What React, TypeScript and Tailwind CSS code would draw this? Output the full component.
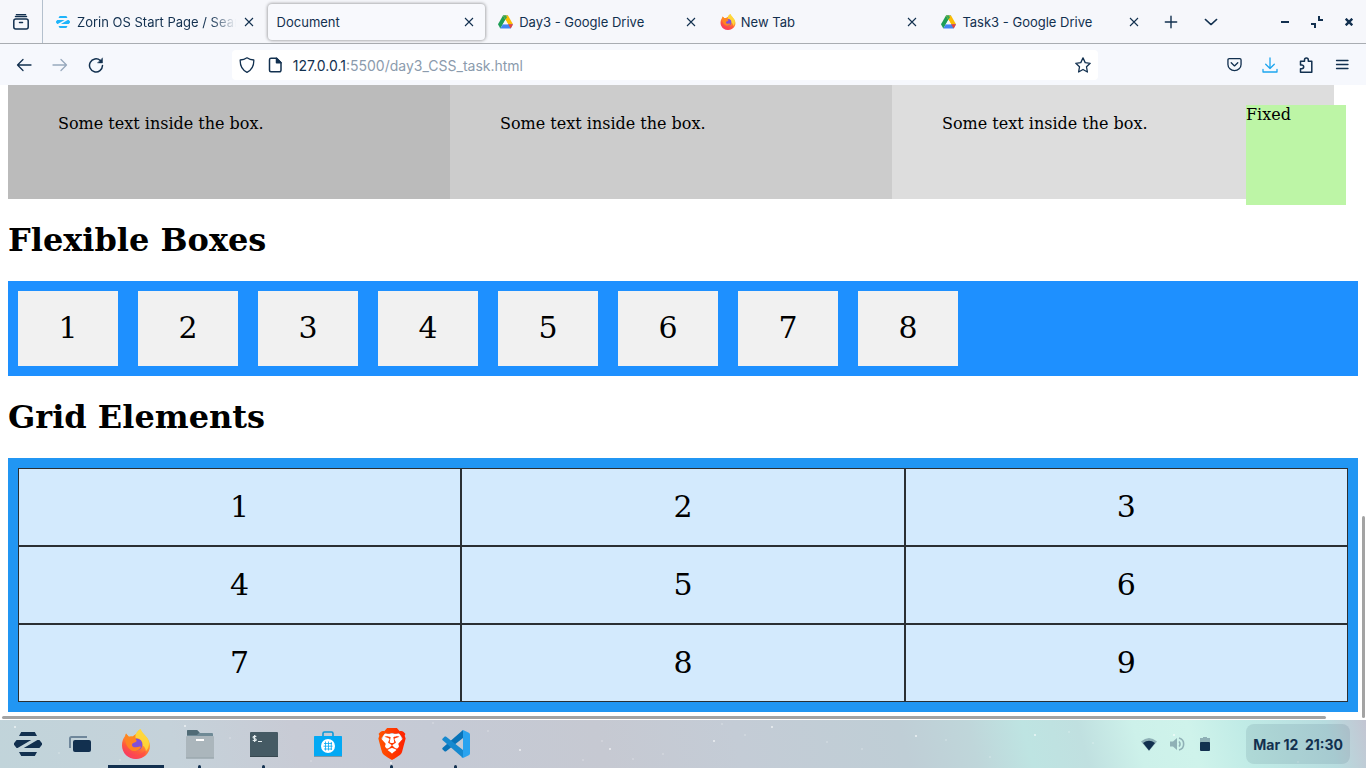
import React from "react";
import { SiBrave } from "react-icons/si";

const NAVY = "#12304f";

function CloseIcon() {
  return (
    <svg width="10" height="10" viewBox="0 0 10 10" fill="none" stroke="currentColor" strokeWidth="1.1">
      <path d="M1 1l8 8M9 1L1 9" />
    </svg>
  );
}

function ZorinMark({ width, height }: { width: number; height: number }) {
  return (
    <svg width={width} height={height} viewBox="0 0 28 24" fill="currentColor">
      <path d="M7.2 0h13.600L23 4H5zM5 20h18l-2.200 4H7.200z" />
      <path d="M2.600 8h14.600L3.600 16h-1L0 12.800v-1.600zM23.400 8h2L28 11.200v1.600L25.400 16H9.800z" />
    </svg>
  );
}

function DriveIcon() {
  return (
    <svg width="15" height="14" viewBox="0 0 15 14">
      <path d="M5 .4L0 9.200l2.300 4.200L7.500 4.600z" fill="#1e9e57" />
      <path d="M5 .4h5L7.500 4.600z" fill="#188038" />
      <path d="M10 .4l5 8.800h-4.900L5.200.9z" fill="#fbbc04" />
      <path d="M5 .4L7.500 4.600 9 2.200 7.800.4z" fill="#34a853" />
      <path d="M4.900 9.200H15l-2.300 4.200H2.300z" fill="#4285f4" />
      <path d="M10.100 9.200H15l-2.300 4.200z" fill="#ea4335" />
      <path d="M7.500 4.800l2.500 4.400H5z" fill="#f6f7fb" />
    </svg>
  );
}

function FirefoxIcon({ size, id }: { size: number; id: string }) {
  return (
    <svg width={size} height={size} viewBox="0 0 30 30">
      <defs>
        <linearGradient id={id} x1="0.8" y1="0" x2="0.3" y2="1">
          <stop offset="0" stopColor="#ffe03a" />
          <stop offset="0.4" stopColor="#ffa02a" />
          <stop offset="0.7" stopColor="#ff5a3c" />
          <stop offset="1" stopColor="#f5316f" />
        </linearGradient>
      </defs>
      <path
        d="M19.500 0c1 3 3.200 4.500 4.800 6.800 2.900 3 4.700 6.400 4.700 10.200C29 24.200 22.700 30 15 30S1 24.200 1 16.500c0-4 1.200-7.500 3.200-9.700L5 4.500l2.800 3.200c1.400-.4 2.500-.4 3.700-.2L15 5l-.8 3.200C14.500 4.500 16.500 2 19.500 0z"
        fill={`url(#${id})`}
      />
      <path d="M2 16c0 8 6 11 12 10.500s11-3.500 11.500-9.500c.8 8-5 12.500-11 12.500S1.500 24 2 16z" fill="#ff4b4b" opacity=".6" />
      <circle cx="15.500" cy="15.500" r="6" fill="#8150d8" />
      <path d="M4.300 6.800L5 4.500l3 3.500 4-.4 2.700-2.300-.5 3.800 1.500 2.900c-1 1.500-3 1.500-4.200 2.500-1.500 2 .5 4.500 3.500 3.700 2.500-.6 4-.2 5.200-1-1.200 4.500-7.500 6.300-11 3.200-4-2.700-5.700-8.800-4.900-13.600z" fill="#ff8522" />
      <path d="M19.500 0c-5 3.500-5.500 7-4.500 9 3.500-.2 7 2.500 6.700 7.500 2 1 3.300 3.500 3 6 4.500-4.500 4.500-11.500-.4-15.700C22.700 4.500 20.500 3 19.500 0z" fill="#ffdb3b" opacity=".85" />
    </svg>
  );
}

type TabInfo = { title: string; icon?: React.ReactNode; active?: boolean; faded?: boolean };

const tabs: TabInfo[] = [
  {
    title: "Zorin OS Start Page / Sear",
    faded: true,
    icon: (
      <span className="text-[#1fb4fa]">
        <ZorinMark width={14} height={12} />
      </span>
    ),
  },
  { title: "Document", active: true },
  { title: "Day3 - Google Drive", icon: <DriveIcon /> },
  { title: "New Tab", icon: <FirefoxIcon size={16} id="tabFox" /> },
  { title: "Task3 - Google Drive", icon: <DriveIcon /> },
];

function Tab({ title, icon, active, faded }: TabInfo) {
  return (
    <div
      className={
        active
          ? "mr-[3px] flex h-9 min-w-0 flex-1 items-center rounded bg-[#f8f9fd] pl-[9px] pr-2 shadow-[0_0_3px_1px_rgba(0,0,0,0.3)]"
          : "mr-[3px] flex h-9 min-w-0 flex-1 items-center gap-[5px] pl-[10px] pr-2"
      }
    >
      {icon && <span className="flex w-4 shrink-0">{icon}</span>}
      <button
        className={
          faded
            ? "min-w-0 flex-1 whitespace-nowrap pt-[2px] text-left [mask-image:linear-gradient(to_right,black_84%,transparent)]"
            : "min-w-0 flex-1 whitespace-nowrap pt-[2px] text-left"
        }
      >
        {title}
      </button>
      <button aria-label={`Close ${title}`} className="flex size-4 shrink-0 items-center justify-center">
        <CloseIcon />
      </button>
    </div>
  );
}

function IconButton({ label, className = "", children }: { label: string; className?: string; children: React.ReactNode }) {
  return (
    <button aria-label={label} className={`flex size-9 shrink-0 items-center justify-center ${className}`}>
      {children}
    </button>
  );
}

function Line({ children, size = 16, width = 1.3 }: { children: React.ReactNode; size?: number; width?: number }) {
  return (
    <svg
      width={size}
      height={size}
      viewBox="0 0 16 16"
      fill="none"
      stroke="currentColor"
      strokeWidth={width}
      strokeLinecap="round"
      strokeLinejoin="round"
    >
      {children}
    </svg>
  );
}

function TabStrip() {
  return (
    <div className="flex h-11 items-center border-b border-[#a9adb2] bg-[#f6f7fb] text-[13px]">
      <button aria-label="Recent browsing" className="flex h-full w-[43px] shrink-0 items-center justify-center border-r border-[#b4c0cd] pr-px">
        <Line width={1.5}>
          <rect x="0.8" y="5" width="14.400" height="10" rx="2" />
          <path d="M2.500 2.600h11M3.500 0.600h9M6.500 8.500h3" />
        </Line>
      </button>
      <div className="ml-[3px] flex min-w-0 max-w-[1107px] flex-1">
        {tabs.map((t) => (
          <Tab key={t.title} {...t} />
        ))}
      </div>
      <IconButton label="New tab">
        <Line size={14} width={1.6}>
          <path d="M8 1.500v13M1.500 8h13" />
        </Line>
      </IconButton>
      <IconButton label="List all tabs" className="ml-1">
        <Line size={14} width={1.6}>
          <path d="M1.500 5L8 11l6.500-6" />
        </Line>
      </IconButton>
      <div className="ml-auto flex pr-px">
        <button aria-label="Minimize" className="flex size-8 items-center justify-center">
          <svg width="8" height="2"><rect width="8" height="2" fill={NAVY} /></svg>
        </button>
        <button aria-label="Restore" className="flex size-8 items-center justify-center">
          <svg width="12" height="12" fill={NAVY}>
            <path d="M7 0h2v3h3v2H7zM0 7h5v5H3V9H0z" />
          </svg>
        </button>
        <button aria-label="Close window" className="flex size-8 items-center justify-center">
          <svg width="8" height="8" stroke={NAVY} strokeWidth="2.4"><path d="M.7.7l6.600 6.600M7.300.7L.7 7.300" /></svg>
        </button>
      </div>
    </div>
  );
}

function Toolbar() {
  return (
    <div className="flex h-[41px] items-center bg-[#f6f8fd] px-[6px]">
      <IconButton label="Back">
        <Line><path d="M1.500 8h13.500M7 2.500L1.500 8 7 13.500" /></Line>
      </IconButton>
      <IconButton label="Forward" className="text-[#98a9bd]">
        <Line><path d="M14.500 8H1M9 2.500L14.500 8 9 13.500" /></Line>
      </IconButton>
      <IconButton label="Reload">
        <Line width={1.500}>
          <path d="M14.500 8.500A6.500 6.500 0 1 1 12.300 3.500" />
          <path d="M14.500 1.200v4.700H9.800z" fill="currentColor" strokeWidth=".5" />
        </Line>
      </IconButton>
      <div className="flex-1" />
      <div className="flex h-[30px] w-[64%] items-center rounded bg-white pl-[7px] pr-[7px]">
        <Line>
          <path d="M8 .8C10 2.200 12.200 2.900 14.800 3c.2 5.500-1.500 9.800-6.800 12.300C2.700 12.800 1 8.500 1.200 3 3.800 2.900 6 2.200 8 .8z" />
        </Line>
        <span className="ml-3 flex">
          <Line width={1.500}>
            <path d="M4 1.200h5.500L14 5.700V13.300a1.500 1.500 0 0 1-1.500 1.500H4a1.500 1.500 0 0 1-1.500-1.500V2.700A1.500 1.500 0 0 1 4 1.200z" />
            <path d="M9.500 1.200v4.500H14z" fill="currentColor" />
          </Line>
        </span>
        <button aria-label="Address" className="ml-[10px] flex-1 pt-px text-left text-[14px] text-[#8b9bad]">
          <span className="text-[#12304f]">127.0.0.1</span>:5500/day3_CSS_task.html
        </button>
        <button aria-label="Bookmark this page">
          <Line>
            <path d="M8 .9l2.200 4.700 5 .7-3.700 3.500.9 5.200L8 12.500 3.600 15l.9-5.200L.8 6.300l5-.7z" />
          </Line>
        </button>
      </div>
      <div className="flex-1" />
      <IconButton label="Pocket">
        <Line size={15} width={1.400}>
          <path d="M2.300 1.800h11.400a1.300 1.300 0 0 1 1.300 1.300V8A7 6.500 0 0 1 1 8V3.100a1.300 1.300 0 0 1 1.300-1.300zM4.500 6.200L8 9.500l3.500-3.300" />
        </Line>
      </IconButton>
      <IconButton label="Downloads" className="text-[#1da5ee]">
        <Line><path d="M8 1v10.500M3.700 7.300L8 11.500l4.300-4.200M1 12.300V15h14v-2.700" /></Line>
      </IconButton>
      <IconButton label="Extensions">
        <Line width={1.500}>
          <path d="M2.500 4.300h4V3a1.900 1.900 0 0 1 3.800 0v1.300h3.500v10.900H2.500v-3.500h1.300a1.900 1.900 0 0 0 0-3.800H2.500z" />
        </Line>
      </IconButton>
      <IconButton label="Menu">
        <Line size={16}><path d="M2.500 3.500h11.500M2.500 7.500h11.500M2.500 11.500h11.500" /></Line>
      </IconButton>
    </div>
  );
}

function Page() {
  return (
    <main className="relative flex-1 overflow-hidden bg-white px-2 pb-2 font-['DejaVu_Serif',serif] text-black">
      <div className="mr-6 grid h-[114px] grid-cols-3 leading-5">
        <p className="bg-[#bbb] pl-[50px] pt-[29px]">Some text inside the box.</p>
        <p className="bg-[#ccc] pl-[50px] pt-[29px]">Some text inside the box.</p>
        <p className="bg-[#ddd] pl-[50px] pt-[29px]">Some text inside the box.</p>
      </div>
      <div className="absolute right-5 top-5 size-[100px] bg-[#bdf5a6] leading-5">Fixed</div>

      <h1 className="py-[21px] text-[32px] font-bold leading-10">Flexible Boxes</h1>
      <div className="flex gap-5 bg-[#1e90ff] p-[10px] text-center text-[30px] leading-[73px]">
        {[1, 2, 3, 4, 5, 6, 7, 8].map((n) => (
          <div key={n} className="w-[100px] bg-[#f1f1f1] pb-[2px]">{n}</div>
        ))}
      </div>

      <h1 className="py-[21px] text-[32px] font-bold leading-10">Grid Elements</h1>
      <div className="grid grid-cols-3 bg-[#2196f3] p-[10px] text-center text-[30px] leading-9">
        {[1, 2, 3, 4, 5, 6, 7, 8, 9].map((n) => (
          <div key={n} className="border border-black/80 bg-white/80 py-5">{n}</div>
        ))}
      </div>

      <div className="absolute bottom-px left-[2px] right-10 h-[3px] rounded bg-[#a3a3a3]" />
      <div className="absolute bottom-[2px] right-px h-[202px] w-[3px] rounded bg-[#a3a3a3]" />
    </main>
  );
}

function FolderIcon() {
  return (
    <svg width="28" height="30" viewBox="0 0 28 30">
      <path d="M1 2a1 1 0 0 1 1-1h9l3 3h12a1 1 0 0 1 1 1v5H1z" fill="#6f8a96" />
      <path d="M1 2a1 1 0 0 1 1-1h9l2.500 2.500L11 6H1z" fill="#506b76" />
      <rect y="7" width="28" height="22.500" rx="1" fill="#abb6bc" />
      <rect y="28.500" width="28" height="1" fill="#94a1a8" />
      <rect x="10" y="10" width="8" height="2" fill="#fff" />
    </svg>
  );
}

function TerminalIcon() {
  return (
    <svg width="28" height="25" viewBox="0 0 28 25">
      <rect width="28" height="25" rx="1" fill="#455a64" />
      <rect y="24" width="28" height="1" fill="#37474f" />
      <path d="M6.300 4.700C5.500 3.800 3 4 3 5.300s3.300 1 3.300 2.400S3.700 9 2.800 8.200M4.600 3v7M8 9.500h4" stroke="#e6eef0" strokeWidth="1.100" fill="none" />
    </svg>
  );
}

function StoreIcon() {
  return (
    <svg width="28" height="26" viewBox="0 0 28 26">
      <path d="M9 6V2.500A1.500 1.500 0 0 1 10.500 1h7A1.500 1.500 0 0 1 19 2.500V6" fill="none" stroke="#0a98d8" strokeWidth="1.600" />
      <rect y="5" width="28" height="20" rx=".6" fill="#03a9f4" />
      <rect y="25" width="28" height="1" fill="#7d98a8" />
      <circle cx="14" cy="15" r="7" fill="#fff" />
      <path d="M11.500 10.500v9M14.500 10.500v9M17.300 11v8M10 12.500h8M9.500 15.200h9M10 18h8" stroke="#03a9f4" strokeWidth=".8" />
    </svg>
  );
}

function BraveIcon() {
  return (
    <span className="relative flex">
      <svg width="32" height="32" viewBox="0 0 32 32" className="absolute">
        <defs>
          <linearGradient id="brave" x1="0" x2="1" y1="0" y2="0">
            <stop offset="0" stopColor="#ff5500" />
            <stop offset="1" stopColor="#ff2000" />
          </linearGradient>
        </defs>
        <path d="M8 6h16l2 6-4 11-6 4-6-4-4-11z" fill="#fff" />
      </svg>
      <SiBrave size={32} className="relative" fill="url(#brave)" />
    </span>
  );
}

function CodeIcon() {
  return (
    <svg width="28" height="28" viewBox="0 0 28 28">
      <path d="M21 0L.7 17.700c-.6.6-.6 1.300 0 1.900l1.800 1.700c.5.4 1.200.4 1.700 0L21 8z" fill="#0873b8" />
      <path d="M21 28L.7 10.300c-.6-.6-.6-1.300 0-1.900l1.800-1.700c.5-.4 1.200-.4 1.700 0L21 20z" fill="#1689cf" />
      <path d="M21 0l5.800 2.800c.8.4 1.200 1 1.200 1.900v18.600c0 .9-.4 1.500-1.200 1.900L21 28c-.8.200-1.400 0-2-.6 1 .7 2 .2 2-1V1.600c0-1.200-1-1.700-2-1 .6-.6 1.200-.8 2-.6z" fill="#2aa3ef" />
    </svg>
  );
}

function DockItem({ label, children, open, active }: { label: string; children: React.ReactNode; open?: boolean; active?: boolean }) {
  return (
    <button aria-label={label} className="relative flex h-12 w-14 items-center justify-center">
      {children}
      {active && <span className="absolute inset-x-0 bottom-0 h-[3px] bg-[#12304f]" />}
      {open && <span className="absolute bottom-0 left-[26px] size-[3px] rounded-t-full bg-[#12304f]" />}
    </button>
  );
}

const stars = [
  [15, 7], [59, 33], [120, 40], [185, 6], [230, 18], [311, 41], [391, 43], [433, 3], [488, 11], [520, 30], [583, 40],
  [602, 21], [610, 29], [633, 39], [663, 34], [714, 21], [722, 4], [745, 15], [772, 7], [827, 22], [862, 29], [916, 16],
  [946, 20], [990, 37], [1035, 15], [1069, 12], [1093, 23], [1174, 15], [1298, 42],
];

function Taskbar() {
  return (
    <footer className="relative flex h-12 items-center bg-[linear-gradient(75deg,#c1d4da_0%,#c5d2da_13%,#c8cbd5_22%,#c5cad5_32%,#c6c9d2_44%,#c4ccd6_54%,#bfced6_66%,#bfd6da_71%,#bee4e2_75%,#c0e0e0_79%,#cdf1ea_83%,#cff3eb_87%,#c0ebe6_91%,#b7dcdf_97%,#c3c5d2_100%)]">
      <svg className="absolute inset-0 size-full" fill="#fff">
        {stars.map(([x, y], i) => (
          <circle key={i} cx={x} cy={y} r={i % 3 ? 0.700 : 1} opacity={i % 3 ? 0.5 : 0.7} />
        ))}
      </svg>
      <nav className="relative flex items-center">
        <DockItem label="Zorin menu">
          <ZorinMark width={28} height={24} />
        </DockItem>
        <button aria-label="Workspaces" className="mr-1 flex h-12 w-12 items-center justify-center">
          <svg width="22" height="16" viewBox="0 0 22 16">
            <path d="M1 12V2.500A1.500 1.500 0 0 1 2.500 1H18" fill="none" stroke="#6f879b" strokeWidth="2" />
            <rect x="4" y="4" width="18" height="12" rx="2" fill={NAVY} />
          </svg>
        </button>
        <div className="flex gap-2">
          <DockItem label="Firefox" active><FirefoxIcon size={30} id="dockFox" /></DockItem>
          <DockItem label="Files" open><FolderIcon /></DockItem>
          <DockItem label="Terminal" open><TerminalIcon /></DockItem>
          <DockItem label="Software"><StoreIcon /></DockItem>
          <DockItem label="Brave" open><BraveIcon /></DockItem>
          <DockItem label="Visual Studio Code" open><CodeIcon /></DockItem>
        </div>
      </nav>
      <div className="relative ml-auto flex items-center pr-4">
        <button aria-label="System status" className="mr-[33px] flex items-center gap-3">
          <svg width="16" height="14" viewBox="0 0 16 14">
            <path d="M0 4.500Q8-2.500 16 4.500L8 14z" fill="#8fb0b6" />
            <path d="M2 6Q8 1.500 14 6L8 13.500z" fill={NAVY} />
          </svg>
          <svg width="16" height="16" viewBox="0 0 16 16" fill="none" stroke="#8fb0b6" strokeWidth="1.600">
            <path d="M1 5.500h3L8 2v12l-4-3.500H1z" fill="#8fb0b6" stroke="none" />
            <path d="M10 5.500a3.500 3.500 0 0 1 0 5M10 2a6.200 6.200 0 0 1 0 12" />
          </svg>
          <span className="flex w-4 justify-center">
            <svg width="10" height="14" viewBox="0 0 10 14">
              <path d="M0 1h3V0h4v1h3v6H0z" fill="#8fb0b6" />
              <rect y="5" width="10" height="9" rx="1" fill={NAVY} />
            </svg>
          </span>
        </button>
        <button className="h-10 whitespace-pre rounded-lg bg-[#12304f]/10 px-[7px] text-[14px] font-bold">{"Mar 12  21:30"}</button>
      </div>
    </footer>
  );
}

export default function App() {
  return (
    <div className="flex min-h-screen flex-col bg-white font-['Inter',sans-serif] text-[#12304f]">
      <header>
        <TabStrip />
        <Toolbar />
      </header>
      <Page />
      <Taskbar />
    </div>
  );
}
